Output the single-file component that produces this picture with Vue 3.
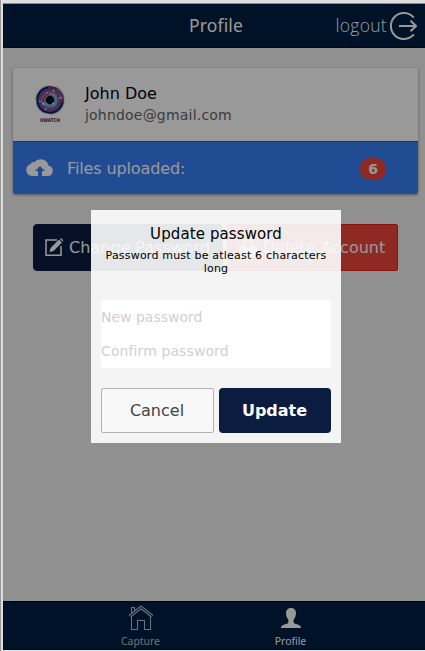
<script setup>
import { ref } from 'vue'

const user = { name: 'John Doe', email: 'johndoe@gmail.com', files: 6 }
const newPassword = ref('')
const confirmPassword = ref('')
</script>

<template>
  <div class="frame">
    <div class="screen">
      <header class="bar">
        <h1>Profile</h1>
        <a class="logout">
          <span>logout</span>
          <svg width="28" height="28" viewBox="0 0 28 28" fill="none" stroke="#fff" stroke-width="2">
            <path d="M24.8 5.6A13 13 0 1 0 24.8 22.4" />
            <path d="M10 14H27M21.5 8.8L27 14L21.5 19.2" />
          </svg>
        </a>
      </header>

      <main>
        <section class="card">
          <div class="person">
            <svg class="avatar" width="34" height="42" viewBox="0 0 34 42" fill="none">
              <circle cx="17" cy="17" r="14" stroke="#9fc6d9" stroke-width="1.5" stroke-dasharray="22 5 14 3" />
              <circle cx="17" cy="17" r="12.5" stroke="#251450" stroke-width="2.4" stroke-dasharray="66 12" />
              <path d="M15 4.500A12.800 12.800 0 0 1 29.500 20" stroke="#a82e35" stroke-width="2" />
              <circle cx="17" cy="17" r="10.2" stroke="#4759bd" stroke-width="3" stroke-dasharray="20 1 9 1" />
              <circle cx="17" cy="17" r="8" stroke="#c94440" stroke-width="1.8" stroke-dasharray="20 2 12 1" />
              <circle cx="17" cy="17" r="5.8" stroke="#66b5df" stroke-width="3" />
              <path d="M11 19A6.200 6.200 0 0 1 16 11" stroke="#9b354c" stroke-width="1.5" />
              <circle cx="17" cy="17" r="4.4" fill="#070d26" />
              <circle cx="20" cy="20.5" r="1" fill="#d4ebee" />
              <text x="17" y="39" text-anchor="middle" textLength="20" lengthAdjust="spacingAndGlyphs">UWATCH</text>
            </svg>
            <div class="details">
              <h2>{{ user.name }}</h2>
              <p>{{ user.email }}</p>
            </div>
          </div>
          <div class="files">
            <svg width="28" height="18" viewBox="0 0 28 18">
              <path fill="#fff" fill-rule="evenodd" d="M6 18A6 6 0 0 1 4.5 6.3Q5.6 3.4 8.6 4A8 8 0 0 1 22.4 7.4A5.4 5.4 0 0 1 22.4 18H16V13H19L14 8L9 13H12V18Z" />
            </svg>
            <span>Files uploaded:</span>
            <b class="badge">{{ user.files }}</b>
          </div>
        </section>

        <div class="actions">
          <button class="change">
            <svg width="19" height="19" viewBox="0 0 19 19">
              <path d="M12 2H1V17.3H16V8" fill="none" stroke="#fff" stroke-width="1.5" />
              <path d="M4.5 14L5.5 10L14 1.5L17 4.5L8.5 13ZM15 .7L16 0L18.3 2.3L17.5 3.5Z" fill="#fff" />
            </svg>
            <span>Change Password</span>
          </button>
          <button class="delete">
            <svg width="18" height="18" viewBox="0 0 18 18">
              <path d="M0 7H18V18H0Z" fill="#fff" />
              <path d="M4.5 8V5A4.5 4.5 0 0 1 13.5 5V8" fill="none" stroke="#fff" stroke-width="2.4" />
            </svg>
            <span>Delete Account</span>
          </button>
        </div>
      </main>

      <nav class="tabs">
        <a class="tab idle">
          <svg width="26" height="26" viewBox="0 0 26 26" fill="none" stroke="#fff" stroke-width="1.1">
            <path d="M1 10.5L13 1L25 10.5M2.5 12L13 3.7L23.5 12M3.5 11V24.5H9.5V15.5H16.5V24.5H22.5V11M3.5 8.5V2.5H6.5V6.2" />
          </svg>
          <span>Capture</span>
        </a>
        <a class="tab">
          <svg width="26" height="26" viewBox="0 0 26 26" fill="#fff">
            <path d="M13 3C16.2 3 18 5 18 8C18 11 17 13 15.8 14.4C15.2 16.8 15.5 18.2 17 18.7C20.5 19.7 23 20 23 23H3C3 20 5.5 19.7 9 18.7C10.5 18.2 10.8 16.8 10.2 14.4C9 13 8 11 8 8C8 5 9.8 3 13 3Z" />
          </svg>
          <span>Profile</span>
        </a>
      </nav>

      <div class="backdrop"></div>
      <form class="popup" @submit.prevent>
        <div class="popup-head">
          <h3>Update password</h3>
          <p>Password must be atleast 6 characters long</p>
        </div>
        <div class="popup-body">
          <input v-model="newPassword" type="password" placeholder="New password" />
          <input v-model="confirmPassword" class="confirm" type="password" placeholder="Confirm password" />
        </div>
        <div class="popup-buttons">
          <button type="button" class="cancel">Cancel</button>
          <button class="update">Update</button>
        </div>
      </form>
    </div>
  </div>
</template>

<style>
body {
  margin: 0;
  overflow: hidden;
}
</style>

<style scoped>
* {
  box-sizing: border-box;
}
h1, h2, h3, p {
  margin: 0;
  font-weight: 400;
}
button, input {
  font-family: inherit;
  margin: 0;
}
svg {
  display: block;
  flex: none;
}
.frame {
  height: 651px;
  padding: 3px 0 1px 2px;
  background: #dedede;
  border-left: 1px solid #999;
  font-family: "DejaVu Sans", sans-serif;
}
.screen {
  position: relative;
  height: 647px;
  display: flex;
  flex-direction: column;
  background: #f0f0f0;
}
.bar {
  height: 45px;
  display: grid;
  grid-template-columns: 1fr auto 1fr;
  align-items: center;
  background: #001e43;
  border-top: 1px solid #e8e8e8;
  border-bottom: 1px solid #000a1c;
  color: #fff;
  padding-left: 4px;
}
.bar h1 {
  grid-column: 2;
  font: 400 17.5px/43px "Noto Sans", sans-serif;
  letter-spacing: .15px;
}
.logout {
  grid-column: 3;
  display: flex;
  align-items: center;
  justify-content: flex-end;
  gap: 2px;
  padding-right: 8px;
  font: 300 17.5px/43px "Open Sans", sans-serif;
  letter-spacing: .3px;
}
main {
  flex: 1;
}
.card {
  margin: 20px 7px 0 10px;
  border-radius: 2px;
  background: #fff;
  box-shadow: 0 1px 3px rgba(0, 0, 0, .4);
  overflow: hidden;
}
.person {
  display: flex;
  height: 73px;
  padding: 15px 20px 0;
}
.details {
  padding-left: 18px;
}
.details h2 {
  font-size: 16px;
  line-height: 21px;
  color: #000;
}
.details p {
  font-size: 14px;
  line-height: 22px;
  letter-spacing: .2px;
  color: #666;
}
.avatar text {
  font: bold 5px "DejaVu Sans", sans-serif;
  fill: #551044;
}
.files {
  height: 53px;
  display: flex;
  align-items: center;
  padding: 1px 32px 0 13px;
  background: #387ef5;
  border-top: 1px solid #0c60ee;
  color: #fff;
  font-size: 16px;
}
.files span {
  margin-left: 13px;
  letter-spacing: -.12px;
}
.files svg {
  margin-top: -3px;
}
.badge {
  margin-left: auto;
  width: 26px;
  height: 22px;
  border-radius: 10px;
  background: #ef473a;
  font-size: 14px;
  line-height: 22px;
  text-align: center;
}
.actions {
  display: flex;
  gap: 4px;
  padding: 30px 27px 0 30px;
}
.actions button {
  height: 47px;
  display: flex;
  align-items: center;
  padding: 0 11px;
  color: #fff;
  font-size: 16px;
  white-space: nowrap;
}
.actions .change {
  width: 190px;
  gap: 5px;
  background: #0a1c40;
  border: 1px solid #0a1c40;
  border-radius: 4px;
}
.actions .delete {
  width: 171px;
  gap: 6px;
  background: #ef473a;
  border: 1px solid #e42112;
  border-radius: 2px;
}
.tabs {
  height: 49px;
  display: flex;
  justify-content: center;
  background: #001e43;
  border-top: 1px solid #000a1c;
  padding-left: 3px;
}
.tab {
  width: 150px;
  display: flex;
  flex-direction: column;
  align-items: center;
  padding-top: 3px;
  color: #fff;
  font: 10.4px/16px "Noto Sans", sans-serif;
}
.tab span {
  margin-top: 2px;
}
.idle {
  opacity: .7;
}
.backdrop {
  position: absolute;
  inset: 0;
  background: rgba(0, 0, 0, .4);
}
.popup {
  position: absolute;
  left: 88px;
  top: 207px;
  width: 250px;
  height: 233px;
  background: rgba(255, 255, 255, .9);
}
.popup-head {
  height: 80px;
  padding: 15px 10px 0;
  border-bottom: 1px solid #eee;
  text-align: center;
  color: #000;
}
.popup-head h3 {
  font-size: 15px;
  line-height: 18px;
  letter-spacing: .1px;
}
.popup-head p {
  margin-top: 6px;
  font-size: 11px;
  line-height: 13px;
  letter-spacing: .2px;
}
.popup-body {
  padding: 10px;
}
.popup-body input {
  display: block;
  width: 100%;
  height: 34px;
  padding: 0;
  border: 0;
  border-radius: 0;
  background: #fff;
  font-size: 14px;
}
.popup-body .confirm {
  letter-spacing: .1px;
}
.popup-body input::placeholder {
  color: #d0d0d0;
}
.popup-buttons {
  display: flex;
  gap: 5px;
  padding: 10px 10px 0;
}
.popup-buttons button {
  height: 45px;
  padding: 0;
  font-size: 16px;
}
.popup-buttons .cancel {
  width: 113px;
  padding-right: 1px;
  border: 1px solid #b2b2b2;
  border-radius: 2px;
  background: #f8f8f8;
  color: #444;
}
.popup-buttons .update {
  width: 112px;
  padding-right: 1px;
  border: 0;
  border-radius: 4px;
  background: #0a1c40;
  color: #fff;
  font-weight: 700;
}
</style>
